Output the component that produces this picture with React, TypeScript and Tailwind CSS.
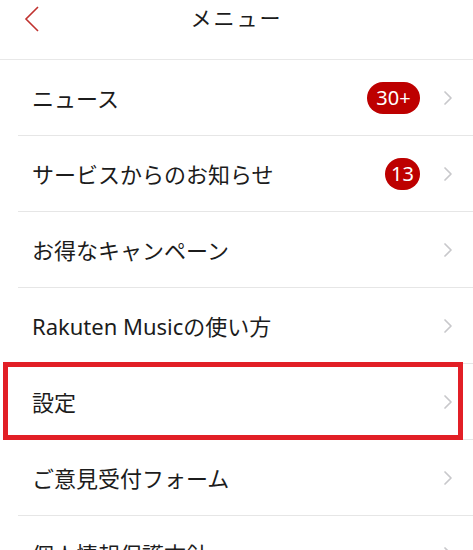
import React from 'react';

type MenuItem = {
  label: string;
  badge?: string;
};

const items: MenuItem[] = [
  { label: 'ニュース', badge: '30+' },
  { label: 'サービスからのお知らせ', badge: '13' },
  { label: 'お得なキャンペーン' },
  { label: 'Rakuten Musicの使い方' },
  { label: '設定' },
  { label: 'ご意見受付フォーム' },
  { label: '個人情報保護方針' },
];

const Chevron = () => (
  <svg width="10" height="16" viewBox="0 0 10 16" fill="none">
    <polyline points="2,2 8,8 2,14" stroke="#c8c8cb" strokeWidth="1.7" strokeLinecap="round" strokeLinejoin="round" />
  </svg>
);

export default function App() {
  return (
    <div
      className="relative w-[473px] h-[550px] overflow-hidden bg-white text-[#1c1c1c]"
      style={{ fontFamily: '"Noto Sans", "Noto Sans CJK JP", sans-serif' }}
    >
      {/* Header */}
      <div className="h-[60px] border-b border-[#e8e8e8]">
        <div className="grid grid-cols-[1fr_auto_1fr] items-center h-[38px]">
          <button className="pl-[24px] flex items-center">
            <svg width="16" height="26" viewBox="0 0 16 26" fill="none">
              <polyline points="14,1 2,13 14,25" stroke="#c0322f" strokeWidth="1.6" strokeLinejoin="miter" />
            </svg>
          </button>
          <h1 className="text-[21px] font-normal tracking-[2px]">メニュー</h1>
          <div />
        </div>
      </div>

      {/* Menu rows */}
      <div className="flex flex-col">
        {items.map((item) => (
          <div key={item.label} className="ml-[18px] h-[76px] border-b border-[#e6e6e6] flex items-center pl-[14px] pr-[20px]">
            <span className="flex-1 text-[22px] leading-none">{item.label}</span>
            {item.badge && (
              <span
                className={
                  'h-[32px] rounded-full bg-[#bd0000] text-white text-[20px] leading-none flex items-center justify-center mr-[23px] ' +
                  (item.badge.length > 2 ? 'w-[53px]' : 'w-[35px]')
                }
              >
                {item.badge}
              </span>
            )}
            <Chevron />
          </div>
        ))}
      </div>

      {/* Highlight annotation */}
      <div className="absolute left-[3px] top-[362px] w-[460px] h-[78px] border-[5px] border-[#e21f26] pointer-events-none" />
    </div>
  );
}
